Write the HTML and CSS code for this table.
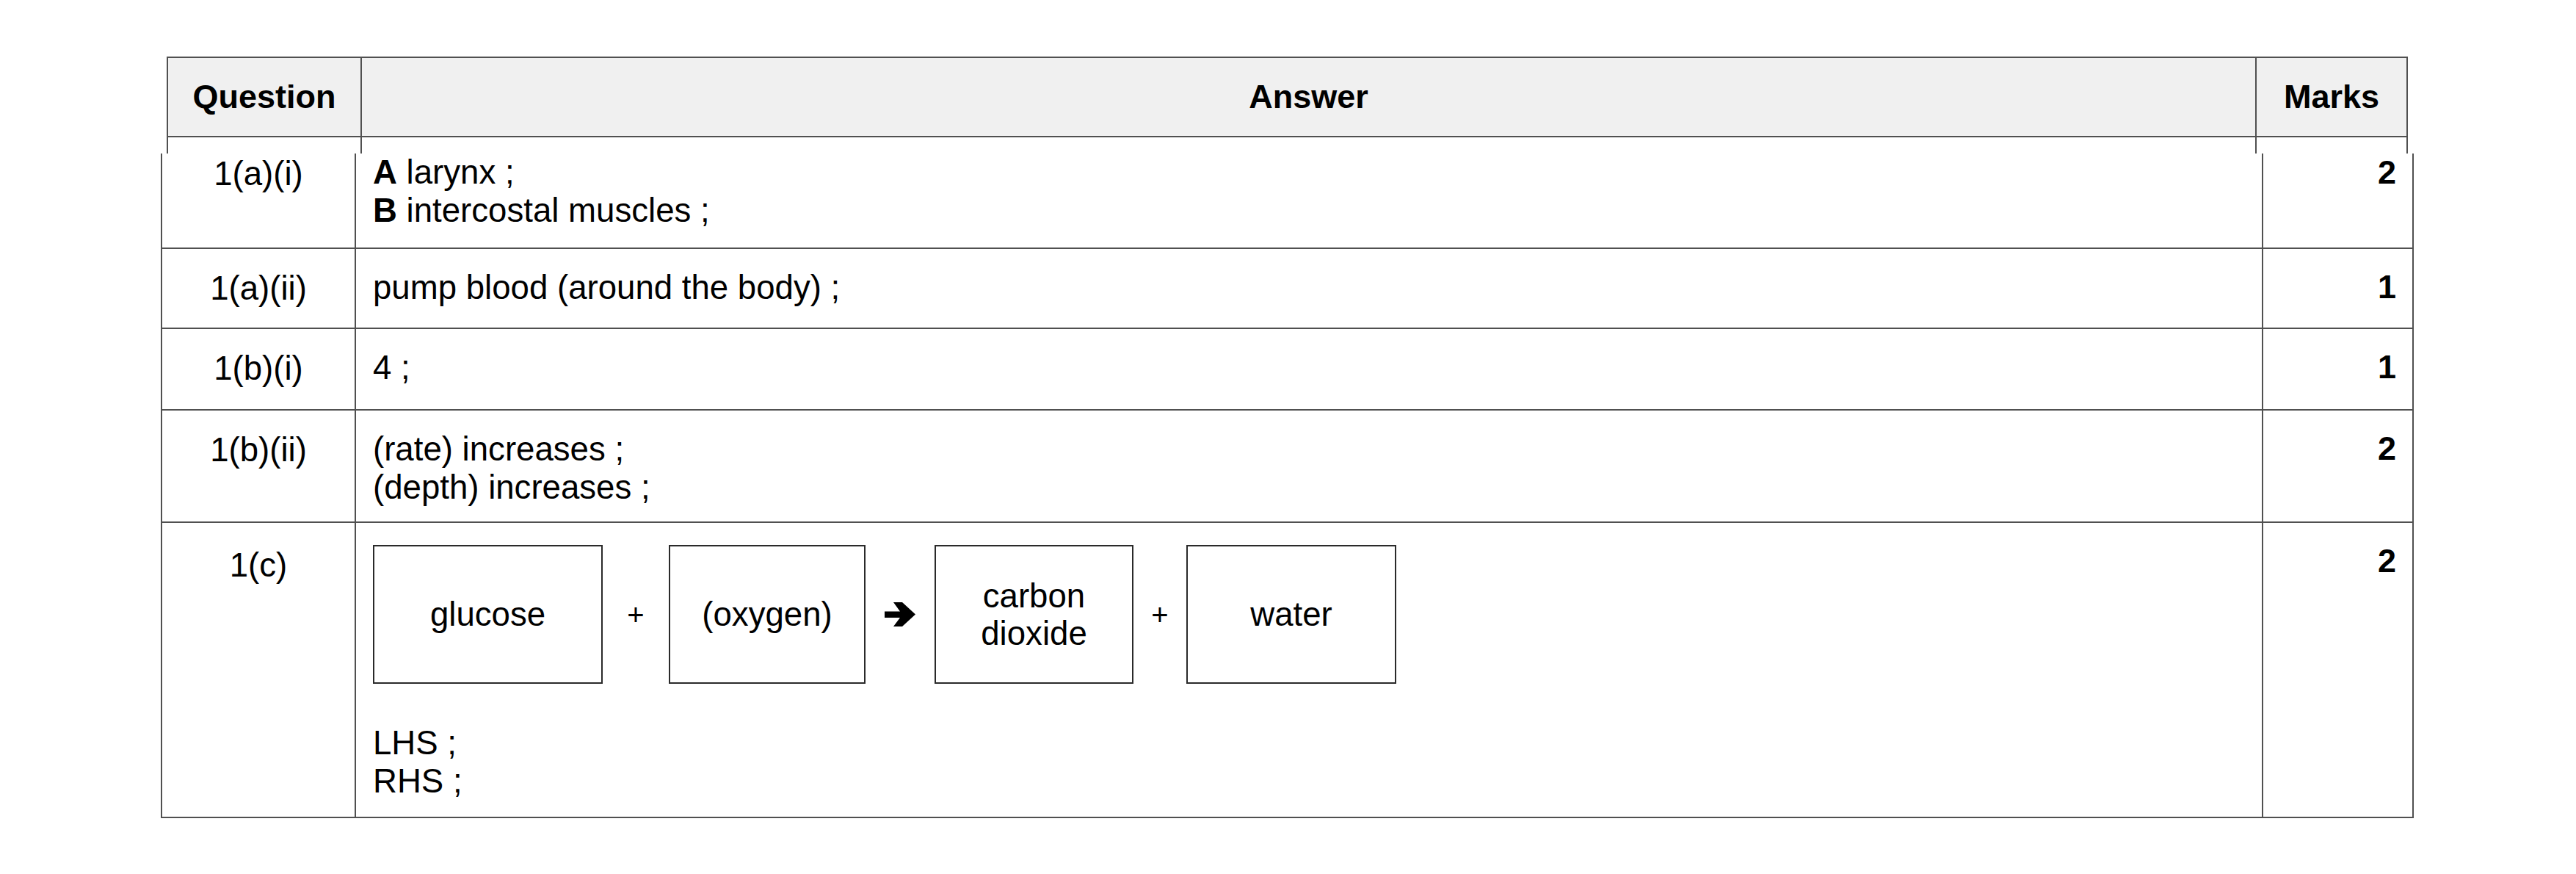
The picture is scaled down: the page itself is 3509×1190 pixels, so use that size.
FILE: index.html
```html
<!DOCTYPE html>
<html lang="en">
<head>
<meta charset="utf-8">
<title>Mark scheme</title>
<link rel="stylesheet" href="styles.css">
</head>
<body>
<div class="sheet">
  <div class="head">
    <div class="hcell">Question</div>
    <div class="hcell">Answer</div>
    <div class="hcell hlast">Marks</div>
  </div>
  <div class="stub">
    <div class="scell"></div>
    <div class="scell"></div>
    <div class="scell hlast"></div>
  </div>
  <div class="grid">
    <div class="cell q first">1(a)(i)</div>
    <div class="cell a first"><b>A</b> larynx ;<br><b>B</b> intercostal muscles ;</div>
    <div class="cell m first">2</div>

    <div class="cell q">1(a)(ii)</div>
    <div class="cell a">pump blood (around the body) ;</div>
    <div class="cell m">1</div>

    <div class="cell q">1(b)(i)</div>
    <div class="cell a">4 ;</div>
    <div class="cell m">1</div>

    <div class="cell q">1(b)(ii)</div>
    <div class="cell a">(rate) increases ;<br>(depth) increases ;</div>
    <div class="cell m">2</div>

    <div class="cell q last">1(c)</div>
    <div class="cell a last">
      <div class="eq">
        <div class="box box-glucose">glucose</div>
        <div class="op op1">+</div>
        <div class="box box-oxygen">(oxygen)</div>
        <div class="op op2"><svg class="arrow" viewBox="0 0 42 33" width="42" height="33"><path d="M0 12.5 H21 L12 0 H24 L42 16.5 L24 33 H12 L21 21 H0 Z" fill="#000"/></svg></div>
        <div class="box box-co2">carbon<br>dioxide</div>
        <div class="op op3">+</div>
        <div class="box box-water">water</div>
      </div>
      <div class="notes">LHS ;<br>RHS ;</div>
    </div>
    <div class="cell m last">2</div>
  </div>
</div>
</body>
</html>
```

FILE: styles.css
```css
html, body {
  margin: 0;
  padding: 0;
  background: #ffffff;
}

body {
  font-family: "Liberation Sans", Arial, sans-serif;
  font-size: 45.6px;
  line-height: 52px;
  color: #000;
}

.sheet {
  padding-top: 77px;
}

.head {
  margin-left: 227px;
  width: 3053px;
  display: grid;
  grid-template-columns: 264px 2581px 208px;
  border-top: 2px solid #505050;
}

.hcell {
  box-sizing: border-box;
  height: 108px;
  background: #f0f0f0;
  border-left: 2px solid #505050;
  border-bottom: 2px solid #505050;
  display: flex;
  align-items: center;
  justify-content: center;
  font-weight: bold;
  font-size: 45px;
}

.hlast {
  border-right: 2px solid #505050;
}

.stub {
  margin-left: 227px;
  width: 3053px;
  display: grid;
  grid-template-columns: 264px 2581px 208px;
}

.scell {
  box-sizing: border-box;
  height: 22px;
  border-left: 2px solid #505050;
}

.grid {
  margin-left: 219px;
  width: 3069px;
  display: grid;
  grid-template-columns: 264px 2598px 207px;
  grid-template-rows: 130px 109px 111px 153px 402px;
}

.cell {
  box-sizing: border-box;
  border-left: 2px solid #505050;
  border-bottom: 2px solid #505050;
  padding-top: 27px;
}

.q {
  text-align: center;
  padding-top: 28px;
}

.a {
  padding-left: 23px;
}

.m {
  border-right: 2px solid #505050;
  text-align: right;
  padding-right: 22px;
  font-weight: bold;
  font-size: 45px;
  padding-top: 26px;
}

.q.first {
  padding-top: 2px;
}

.a.first,
.m.first {
  padding-top: 0;
}

.q.last {
  padding-top: 32px;
}

.a.last {
  padding-top: 30px;
}

.eq {
  display: flex;
  align-items: center;
}

.box {
  box-sizing: border-box;
  height: 189px;
  border: 2px solid #2a2a2a;
  display: flex;
  align-items: center;
  justify-content: center;
  text-align: center;
  line-height: 51px;
}

.box-glucose { width: 313px; }
.box-oxygen { width: 268px; }
.box-co2 { width: 271px; }
.box-water { width: 286px; }

.op {
  display: flex;
  align-items: center;
  justify-content: center;
  font-size: 40px;
}

.op1 { width: 90px; }
.op2 { width: 94px; }
.op3 { width: 72px; }

.arrow {
  display: block;
}

.notes {
  margin-top: 55px;
}
```
